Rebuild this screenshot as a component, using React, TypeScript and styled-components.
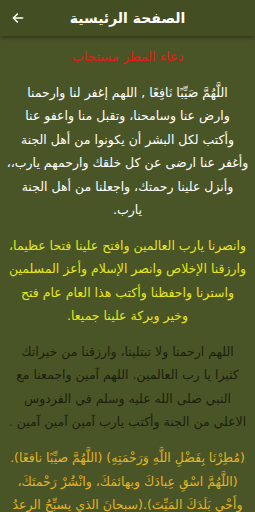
import styled, { createGlobalStyle } from 'styled-components'

const GlobalStyle = createGlobalStyle`
  html, body {
    margin: 0;
    padding: 0;
    background-color: #4a5527;
    font-family: "DejaVu Sans", "Noto Sans", sans-serif;
  }
`

const Page = styled.div`
  width: 255px;
  height: 512px;
  overflow: hidden;
  background-color: #4a5527;
  display: flex;
  flex-direction: column;
`

const Header = styled.header`
  height: 36px;
  flex-shrink: 0;
  background-color: #434e22;
  box-shadow: 0 2px 4px rgba(0, 0, 0, 0.35);
  display: flex;
  align-items: center;
  position: relative;
  z-index: 1;
`

const BackButton = styled.button`
  width: 36px;
  height: 36px;
  border: none;
  background: none;
  padding: 0;
  display: flex;
  align-items: center;
  justify-content: center;
  color: #ffffff;
`

const Title = styled.h1`
  flex: 1;
  margin: 0 36px 0 0;
  text-align: center;
  font-size: 14px;
  font-weight: bold;
  color: #ffffff;
  direction: rtl;
`

const Content = styled.main`
  display: flex;
  flex-direction: column;
  align-items: center;
  padding: 9px 0 0;
  gap: 12.5px;
  direction: rtl;
  text-align: center;
`

const Heading = styled.h2`
  margin: 0;
  font-size: 13px;
  font-weight: normal;
  color: #e51a1a;
  line-height: 23.4px;
`

const Paragraph = styled.p<{ $color: string }>`
  margin: 0;
  font-size: 12.5px;
  line-height: 23.4px;
  white-space: nowrap;
  color: ${p => p.$color};
`

const ArrowIcon = () => (
  <svg width="14" height="14" viewBox="0 0 24 24" fill="none" stroke="currentColor" strokeWidth="2.6" strokeLinecap="round" strokeLinejoin="round">
    <path d="M20 12H5" />
    <path d="M11 5l-7 7 7 7" />
  </svg>
)

const prayers: { color: string; lines: string[] }[] = [
  {
    color: '#ffffff',
    lines: [
      'اللَّهُمَّ صَيِّبًا نَافِعًا , اللهم إغفر لنا وارحمنا',
      'وارض عنا وسامحنا، وتقبل منا واعفو عنا',
      'وأكتب لكل البشر أن يكونوا من أهل الجنة',
      'وأغفر عنا ارضى عن كل خلقك وارحمهم يارب،،',
      'وأنزل علينا رحمتك، واجعلنا من أهل الجنة',
      'يارب.',
    ],
  },
  {
    color: '#e6e61a',
    lines: [
      'وانصرنا يارب العالمين وافتح علينا فتحا عظيما،',
      'وارزقنا الإخلاص وانصر الإسلام وأعز المسلمين',
      'واسترنا واحفظنا وأكتب هذا العام عام فتح',
      'وخير وبركة علينا جميعا.',
    ],
  },
  {
    color: '#1c1f0c',
    lines: [
      'اللهم ارحمنا ولا تبتلينا، وارزقنا من خيراتك',
      'كثيرا يا رب العالمين. اللهم آمين واجمعنا مع',
      'النبي صلى الله عليه وسلم في الفردوس',
      'الاعلي من الجنة وأكتب يارب آمين آمين آمين .',
    ],
  },
  {
    color: '#e3b324',
    lines: [
      '(مُطِرْنَا بِفَضْلِ اللَّهِ وَرَحْمَتِهِ) (اللَّهُمَّ صيِّبًا نافعًا).',
      '(اللَّهُمَّ اسْقِ عِبادَكَ وبهائمَكَ، وانْشُرْ رَحْمتَكَ،',
      'وأَحْيِ بَلَدَكَ المَيِّتَ).(سبحانَ الذي يسبِّحُ الرعدُ',
      'بحمدِه والملائكةُ من خيفتِه).',
    ],
  },
]

export default function App() {
  return (
    <>
      <GlobalStyle />
      <Page>
        <Header>
          <BackButton aria-label="رجوع">
            <ArrowIcon />
          </BackButton>
          <Title>الصفحة الرئيسية</Title>
        </Header>
        <Content>
          <Heading>دعاء المطر مستجاب</Heading>
          {prayers.map((p, i) => (
            <Paragraph key={i} $color={p.color}>
              {p.lines.map((line, j) => (
                <span key={j}>
                  {line}
                  {j < p.lines.length - 1 && <br />}
                </span>
              ))}
            </Paragraph>
          ))}
        </Content>
      </Page>
    </>
  )
}
